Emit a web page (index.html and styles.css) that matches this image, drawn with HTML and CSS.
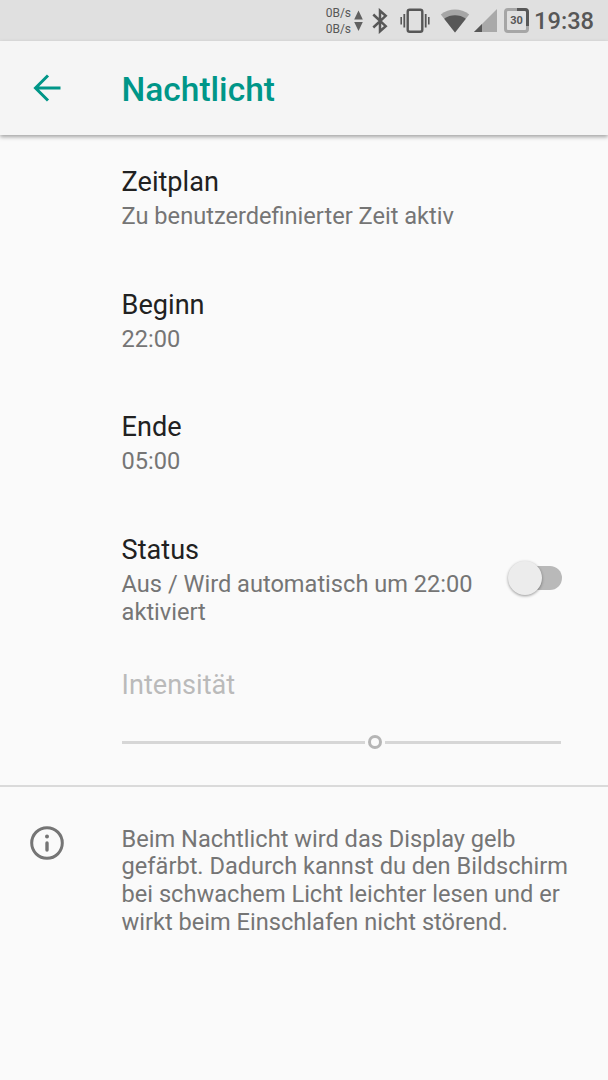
FILE: index.html
```html
<!DOCTYPE html>
<html lang="de">
<head>
    <meta charset="UTF-8">
    <meta name="viewport" content="width=device-width, initial-scale=1.0">
    <title>Nachtlicht</title>
    <link rel="stylesheet" href="styles.css">
</head>
<body>
    <div class="status-bar">
        <div class="net-speed">
            <span>0B/s</span>
            <span>0B/s</span>
        </div>
        <svg class="arrows" width="9" height="22" viewBox="0 0 9 22" fill="#616161">
            <path d="M4.500 0.500L8.800 9.500H.2zM4.500 21L8.800 12H.2z"/>
        </svg>
        <svg class="bluetooth" width="16" height="26" viewBox="0 0 16 26" fill="none" stroke="#575757" stroke-width="2.500">
            <path d="M1.300 6.500L13.700 18.200L8 23.300V2.700L13.700 7.800L1.300 19.500"/>
        </svg>
        <svg class="vibrate" width="30" height="26" viewBox="0 0 30 26" fill="none" stroke="#575757">
            <rect x="7.700" y="1.700" width="14.600" height="22" rx="2" stroke-width="2.400"/>
            <path d="M4.300 6V19.500M25.700 6V19.500" stroke-width="1.800"/>
            <path d="M1.200 9V16.500M28.800 9V16.500" stroke-width="1.600"/>
        </svg>
        <svg class="wifi" width="30" height="24" viewBox="0 0 30 24">
            <path d="M15 23.500L.8 5.400C9 -1.200 21 -1.200 29.200 5.400z" fill="#a6a6a6"/>
            <path d="M15 23.500L4.200 9.700C10.500 5.200 19.500 5.200 25.800 9.700z" fill="#575757"/>
        </svg>
        <svg class="signal" width="23" height="23" viewBox="0 0 23 23">
            <path d="M0 23L23 0V23z" fill="#a9a9a9"/>
            <path d="M0 23L8 15V23z" fill="#575757"/>
        </svg>
        <div class="battery">
            <svg width="25" height="25" viewBox="0 0 25 25" fill="none" stroke-width="3">
                <rect x="1.500" y="1.500" width="22" height="22" rx="2.500" stroke="#a6a6a6"/>
                <path d="M13 1.500H21Q23.500 1.500 23.500 4V18" stroke="#575757"/>
            </svg>
            <span class="battery-level">30</span>
        </div>
        <span class="clock">19:38</span>
    </div>

    <header class="toolbar">
        <svg class="back" width="28" height="28" viewBox="0 0 28 28" fill="none" stroke="#009688" stroke-width="3">
            <path d="M27.500 14H3M15 1.500L2.500 14L15 26.500"/>
        </svg>
        <h1>Nachtlicht</h1>
    </header>

    <main>
        <div class="preference">
            <h2>Zeitplan</h2>
            <p>Zu benutzerdefinierter Zeit aktiv</p>
        </div>
        <div class="preference">
            <h2>Beginn</h2>
            <p>22:00</p>
        </div>
        <div class="preference">
            <h2>Ende</h2>
            <p>05:00</p>
        </div>
        <div class="preference with-switch">
            <div class="preference-text">
                <h2>Status</h2>
                <p>Aus / Wird automatisch um 22:00 aktiviert</p>
            </div>
            <div class="switch">
                <div class="switch-thumb"></div>
            </div>
        </div>
        <div class="intensity">
            <h2>Intensität</h2>
            <div class="slider">
                <div class="slider-left"></div>
                <div class="slider-thumb"></div>
                <div class="slider-right"></div>
            </div>
        </div>
    </main>

    <footer class="info">
        <svg class="info-icon" width="34" height="34" viewBox="0 0 34 34" fill="none" stroke="#757575">
            <circle cx="17" cy="17" r="15.300" stroke-width="3"/>
            <path d="M17 17V24" stroke-width="3.400" stroke-linecap="round"/>
            <circle cx="17" cy="10.500" r="2" fill="#757575" stroke="none"/>
        </svg>
        <p>Beim Nachtlicht wird das Display gelb gefärbt. Dadurch kannst du den Bildschirm bei schwachem Licht leichter lesen und er wirkt beim Einschlafen nicht störend.</p>
    </footer>
</body>
</html>
```
FILE: styles.css
```css
body {
    margin: 0;
    font-family: Roboto, "Noto Sans", sans-serif;
    background-color: #fafafa;
    color: #757575;
}

h1, h2, p {
    margin: 0;
}

h2 {
    font-size: 27.1px;
    font-weight: 400;
    line-height: 31.7px;
    color: #212121;
}

p {
    font-size: 23.6px;
    line-height: 27.7px;
}

/* Status bar */
.status-bar {
    display: flex;
    align-items: center;
    justify-content: flex-end;
    box-sizing: border-box;
    height: 41px;
    padding-right: 14px;
    background-color: #e0e0e0;
    color: #575757;
}

.net-speed {
    display: flex;
    flex-direction: column;
    font-size: 12px;
    line-height: 16px;
    margin-right: 3px;
    padding-top: 1px;
}

.bluetooth {
    margin-left: 9px;
}

.vibrate {
    margin-left: 12px;
}

.wifi {
    margin-left: 10px;
}

.signal {
    margin-left: 4px;
}

.battery {
    display: grid;
    place-items: center;
    margin-left: 7px;
}

.battery svg,
.battery-level {
    grid-area: 1 / 1;
}

.battery-level {
    font-size: 11px;
    font-weight: 700;
}

.clock {
    margin-left: 5px;
    font-size: 23.64px;
    font-weight: 500;
}

/* Toolbar */
.toolbar {
    display: flex;
    align-items: center;
    height: 94px;
    padding-left: 33px;
    background-color: #f5f5f5;
    box-shadow: 0 2px 4px rgba(0, 0, 0, 0.35);
}

.toolbar h1 {
    margin-left: 60.500px;
    padding-top: 2px;
    font-size: 33.5px;
    font-weight: 500;
    color: #009688;
}

/* Preferences */
main {
    padding-top: 0.7px;
}

.preference {
    padding: 31.300px 46px 27.700px 121.600px;
}

.preference p {
    margin-top: 4.300px;
}

.with-switch {
    display: flex;
    align-items: center;
    justify-content: space-between;
}

.preference-text {
    width: 370px;
}

.switch {
    display: flex;
    align-items: center;
    width: 44px;
    height: 24px;
    margin-bottom: 5px;
    border-radius: 12px;
    background-color: #b9b9b9;
}

.switch-thumb {
    flex: none;
    width: 34px;
    height: 34px;
    margin-left: -10px;
    border-radius: 50%;
    background-color: #ececec;
    box-shadow: 0 1px 3px rgba(0, 0, 0, 0.4);
}

.intensity {
    padding: 15.600px 47px 36px 121.600px;
}

.intensity h2 {
    color: #bababa;
}

.slider {
    display: flex;
    align-items: center;
    gap: 3px;
    margin-top: 33.700px;
}

.slider-left,
.slider-right {
    height: 3px;
    background-color: #d6d6d6;
}

.slider-left {
    width: 243px;
}

.slider-right {
    flex: 1;
}

.slider-thumb {
    box-sizing: border-box;
    width: 14px;
    height: 14px;
    border: 3px solid #b5b5b5;
    border-radius: 50%;
}

/* Info text */
.info {
    display: flex;
    align-items: flex-start;
    padding: 38.500px 34px 0 30px;
    border-top: 2px solid #dadada;
}

.info-icon {
    flex: none;
    margin-right: 57.600px;
}
```
